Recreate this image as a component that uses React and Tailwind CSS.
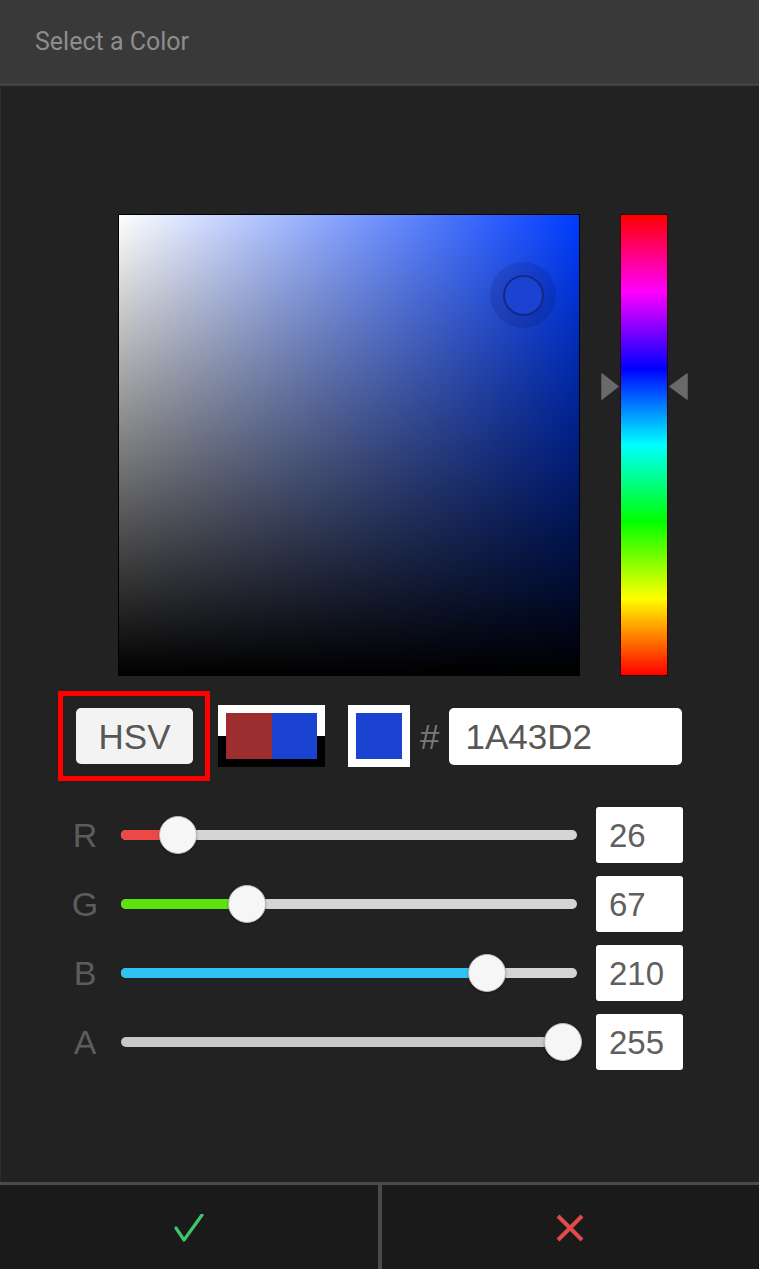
import React from "react";

const channels = [
  { label: "R", value: 26, fill: "bg-[#ec4848]", track: "bg-[#d4d4d4]" },
  { label: "G", value: 67, fill: "bg-[#5de20c]", track: "bg-[#d4d4d4]" },
  { label: "B", value: 210, fill: "bg-[#2fc3f3]", track: "bg-[#d4d4d4]" },
  { label: "A", value: 255, fill: "bg-transparent", track: "bg-[#c8c8c8]" },
];

// thumb centre runs from 13px to 442px along the 456px track
const thumbX = (v) => 13 + (v / 255) * 429;

function Slider({ label, value, fill, track }) {
  const x = thumbX(value);
  return (
    <div className="flex items-center h-[56px]">
      <div className="w-[50px] ml-[59px] text-center text-[34px] leading-none text-[#5c5c5c]">
        {label}
      </div>
      <div className={`relative ml-[11px] w-[456px] h-[10px] rounded-full ${track}`}>
        <div
          className={`absolute left-0 top-0 h-full rounded-l-full ${fill}`}
          style={{ width: x }}
        />
        <div
          className="absolute top-1/2 w-[38px] h-[38px] -translate-x-1/2 -translate-y-1/2 rounded-full bg-[#f6f6f6] border border-[#b9b9b9] shadow-[0_1px_2px_rgba(0,0,0,0.4)]"
          style={{ left: x }}
        />
      </div>
      <div className="ml-[19px] w-[87px] h-[56px] rounded-[3px] bg-white flex items-center pl-[13px] text-[33px] leading-none text-[#5f5f5f]">
        {value}
      </div>
    </div>
  );
}

export default function App() {
  return (
    <div className="w-[759px] h-[1269px] flex flex-col bg-[#222222] font-['Liberation_Sans',Arial,sans-serif] overflow-hidden">
      {/* HEADER */}
      <div className="h-[86px] shrink-0 bg-[#393939] border-b-[3px] border-[#414141] flex items-center pl-[35px]">
        <span className="font-['Roboto',sans-serif] text-[25px] text-[#8d8d8d]">
          Select a Color
        </span>
      </div>

      {/* BODY */}
      <div className="flex-1 flex flex-col pt-[128px] border-l border-[#2c2c2c]">
        {/* SV square + hue bar */}
        <div className="flex items-start pl-[117px]">
          <div className="relative w-[462px] h-[462px] border border-black bg-[#003cff]">
            <div className="absolute inset-0 bg-[linear-gradient(to_right,#ffffff,rgba(255,255,255,0))]" />
            <div className="absolute inset-0 bg-[linear-gradient(to_top,#000000,rgba(0,0,0,0))]" />
            <div className="absolute left-[371px] top-[47px] w-[66px] h-[66px] rounded-full bg-[rgba(0,0,40,0.12)] flex items-center justify-center">
              <div className="w-[41px] h-[41px] rounded-full border-[2.5px] border-[#14288a] bg-[#1a43d2]" />
            </div>
          </div>

          <div className="relative ml-[40px] w-[48px] h-[462px] border border-[#3a0000] bg-[linear-gradient(to_bottom,#ff0000,#ff00ff,#0000ff,#00ffff,#00ff00,#ffff00,#ff0000)]">
            <svg
              className="absolute left-[-20px] top-[158px]"
              width="18"
              height="27"
              viewBox="0 0 18 27"
            >
              <polygon
                points="1,1 17,13.5 1,26"
                fill="#6a6a6a"
                stroke="#6a6a6a"
                strokeWidth="1.5"
                strokeLinejoin="round"
              />
            </svg>
            <svg
              className="absolute left-[48px] top-[158px]"
              width="19"
              height="27"
              viewBox="0 0 19 27"
            >
              <polygon
                points="18,1 1,13.5 18,26"
                fill="#6a6a6a"
                stroke="#6a6a6a"
                strokeWidth="1.5"
                strokeLinejoin="round"
              />
            </svg>
          </div>
        </div>

        {/* mode / swatches / hex */}
        <div className="flex items-center mt-[15px] pl-[57px] h-[90px]">
          <div className="w-[152px] h-[90px] border-[5px] border-[#ff0000] flex items-center pl-[13px]">
            <button className="w-[117px] h-[56px] rounded-[5px] bg-[#f3f3f3] text-[35px] leading-none text-[#575757]">
              HSV
            </button>
          </div>

          <div className="ml-[8px] w-[107px] h-[62px] p-[8px] flex bg-[linear-gradient(to_bottom,#ffffff_50%,#000000_50%)]">
            <div className="flex-1 bg-[#9c2e2f]" />
            <div className="flex-1 bg-[#1a43d2]" />
          </div>

          <div className="ml-[23px] w-[62px] h-[62px] p-[8px] bg-white">
            <div className="w-full h-full bg-[#1a43d2]" />
          </div>

          <span className="ml-[10px] text-[35px] leading-none text-[#7a7a7a]">#</span>

          <div className="ml-[10px] w-[233px] h-[57px] rounded-[5px] bg-white flex items-center pl-[16px] text-[35px] leading-none text-[#575757]">
            1A43D2
          </div>
        </div>

        {/* RGBA sliders */}
        <div className="flex flex-col gap-[13px] mt-[26px]">
          {channels.map((c) => (
            <Slider key={c.label} {...c} />
          ))}
        </div>
      </div>

      {/* FOOTER */}
      <div className="h-[87px] shrink-0 flex border-t-[3px] border-[#4a4a4a] bg-[#1a1a1a]">
        <button className="flex-1 flex items-center justify-center pt-[2px]">
          <svg width="30" height="28" viewBox="0 0 30 28">
            <polyline
              points="2,14 10,26 28,1"
              fill="none"
              stroke="#3fc56b"
              strokeWidth="3.2"
              strokeLinecap="round"
              strokeLinejoin="round"
            />
          </svg>
        </button>
        <div className="w-[4px] bg-[#4a4a4a]" />
        <button className="flex-1 flex items-center justify-center pt-[2px]">
          <svg width="28" height="28" viewBox="0 0 28 28">
            <path d="M2 2 L26 26 M26 2 L2 26" stroke="#e04a4a" strokeWidth="4" />
          </svg>
        </button>
      </div>
    </div>
  );
}
